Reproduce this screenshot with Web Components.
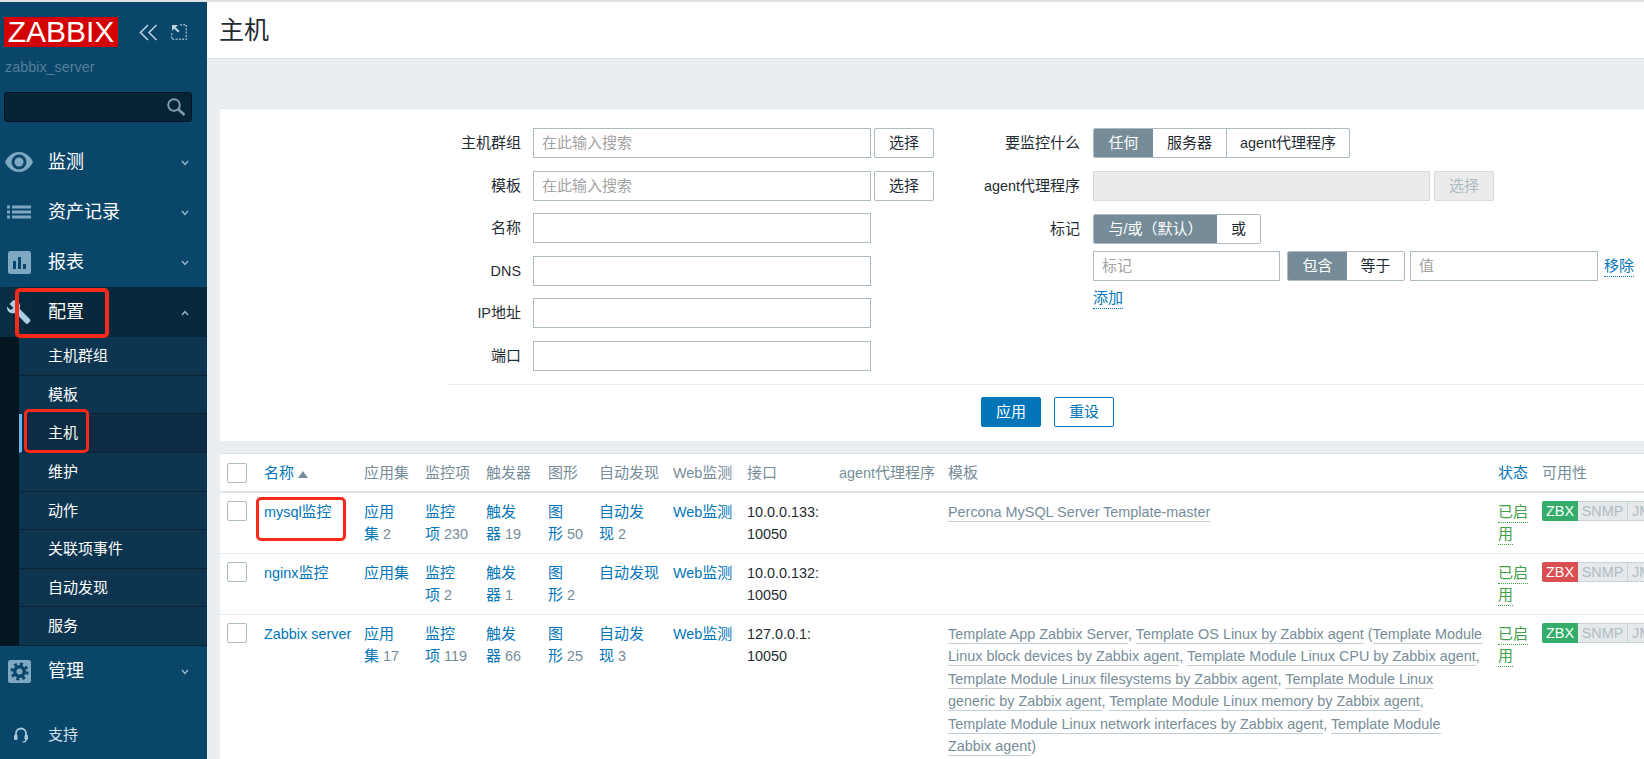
<!DOCTYPE html>
<html lang="zh">
<head>
<meta charset="utf-8">
<title>主机</title>
<style>
html,body{margin:0;padding:0;height:759px;overflow:hidden;background:#fff}
body{font:14.4px/22.5px "Liberation Sans","Noto Sans CJK SC",sans-serif;color:#1f2c33}
</style>
</head>
<body>
<zbx-app>
  <zbx-sidebar slot="side"></zbx-sidebar>
  <zbx-page-header>主机</zbx-page-header>
  <zbx-filter></zbx-filter>
  <zbx-hosts>
    <zbx-host-row name="mysql监控" marked apps="应用|集 2" items="监控|项 230" triggers="触发|器 19" graphs="图|形 50" disc="自动发|现 2" iface="10.0.0.133:|10050" zbx="ok" tpl="p"></zbx-host-row>
    <zbx-host-row name="nginx监控" apps="应用集" items="监控|项 2" triggers="触发|器 1" graphs="图|形 2" disc="自动发现" iface="10.0.0.132:|10050" zbx="bad"></zbx-host-row>
    <zbx-host-row name="Zabbix server" apps="应用|集 17" items="监控|项 119" triggers="触发|器 66" graphs="图|形 25" disc="自动发|现 3" iface="127.0.0.1:|10050" zbx="ok" tpl="z"></zbx-host-row>
  </zbx-hosts>
</zbx-app>
<script>
const cjk = s => s.replace(/[\u3400-\u9fff\uff00-\uffef]+/g, m => `<span class="c">${m}</span>`);
const CJK_CSS = `.c{font-size:15px}`;
function shadow(el, html){ el.attachShadow({mode:'open'}).innerHTML = html; }

customElements.define('zbx-app', class extends HTMLElement{
  constructor(){super();shadow(this,`<style>
    :host{display:grid;grid-template-columns:207px 1fr;height:757px;border-top:2px solid #dfe2e4;overflow:hidden;background:#fff}
    main{display:flex;flex-direction:column;background:#ebeef0;min-width:0;overflow:hidden}
  </style><slot name="side"></slot><main><slot></slot></main>`);}
});

customElements.define('zbx-mark', class extends HTMLElement{
  constructor(){super();shadow(this,`<style>
    :host{position:absolute;box-sizing:border-box;border:3px solid #fa2a1a;border-radius:5px;pointer-events:none;z-index:5}
  </style>`);}
});

const ICONS = {
  eye:`<svg width="28" height="20" viewBox="0 0 28 20"><path fill="#7fa8c2" d="M14 0C7.5 0 2.5 4.5 0 10c2.500 5.500 7.500 10 14 10s11.500-4.500 14-10C25.500 4.500 20.500 0 14 0z"/><circle cx="14" cy="10" r="7.500" fill="#0a466a"/><circle cx="14" cy="10" r="4.500" fill="#7fa8c2"/></svg>`,
  list:`<svg width="24" height="14" viewBox="0 0 24 14" fill="#7fa8c2"><rect x="0" y="0.500" width="3" height="3"/><rect x="5" y="0.500" width="19" height="3"/><rect x="0" y="5.500" width="3" height="3"/><rect x="5" y="5.500" width="19" height="3"/><rect x="0" y="10.500" width="3" height="3"/><rect x="5" y="10.500" width="19" height="3"/></svg>`,
  chart:`<svg width="23" height="23" viewBox="0 0 23 23"><rect width="23" height="23" rx="2.500" fill="#7fa8c2"/><rect x="5" y="10" width="3" height="8" fill="#0a466a"/><rect x="10" y="6" width="3" height="12" fill="#0a466a"/><rect x="15" y="13" width="3" height="5" fill="#0a466a"/></svg>`,
  wrench:`<svg width="24" height="24" viewBox="0 0 24 24"><path fill="#a9d0e5" d="M6 0.500 2.500 4 6.500 8 3.500 10 0 6.500C-.5 10 1.500 13 5 13.300c1.500.100 2.500-.100 3.500-.600L18.500 23.300c.800.800 2 .800 2.800 0l1.500-1.500c.800-.800.800-2 0-2.800L12.500 8.800c.500-1 .700-2.200.500-3.500C12.500 2 9.500-.200 6 .500z"/></svg>`,
  gear:`<svg width="23" height="23" viewBox="0 0 23 23"><rect width="23" height="23" rx="2.500" fill="#7fa8c2"/><circle cx="11.500" cy="11.500" r="6.500" fill="#0a466a"/><circle cx="11.500" cy="11.500" r="7.600" fill="none" stroke="#0a466a" stroke-width="3" stroke-dasharray="3 3"/><circle cx="11.500" cy="11.500" r="3" fill="#7fa8c2"/></svg>`,
  head:`<svg width="14" height="16" viewBox="0 0 14 16" fill="none"><path d="M2 9V6.500a5 5 0 0 1 10 0V9" stroke="#a9c9db" stroke-width="1.800"/><rect x="0" y="7.500" width="3.500" height="5.500" rx="1.500" fill="#a9c9db"/><rect x="10.500" y="7.500" width="3.500" height="5.500" rx="1.500" fill="#a9c9db"/><path d="M12 13c0 1.500-1.500 2-3.500 2" stroke="#a9c9db" stroke-width="1.200"/></svg>`
};
const CHEV = d => `<svg class="chev" width="8" height="6" viewBox="0 0 8 6" fill="none"><path d="${d?'M1 1l3 3.500L7 1':'M1 5l3-3.500L7 5'}" stroke="#9dbccd" stroke-width="1.300"/></svg>`;

customElements.define('zbx-menu-item', class extends HTMLElement{
  connectedCallback(){
    if(this.shadowRoot) return;
    const open=this.hasAttribute('open');
    shadow(this,`<style>
      :host{display:flex;align-items:center;height:50px;position:relative;color:#fff;font-size:18px;flex:none}
      :host([open]){background:linear-gradient(90deg,#0a2e44,#08293d 30px)}
      .i{width:48px;flex:none;display:flex;justify-content:center;padding-right:10px;box-sizing:border-box;height:24px;align-items:center}
      .t{flex:1}
      .chev{margin-right:18px;margin-top:2px}
    </style><span class="i">${ICONS[this.getAttribute('icon')]}</span><span class="t"><slot></slot></span>${CHEV(!open)}`);
  }
});

customElements.define('zbx-sub-item', class extends HTMLElement{
  constructor(){super();shadow(this,`<style>
    :host{display:flex;align-items:center;box-sizing:border-box;height:38.625px;padding:1px 0 0 29px;background:#0e3550;border-bottom:1px solid #0a2231;color:#fff;font-size:15px;position:relative;flex:none}
    :host([current]){background:#0b2c42;padding-left:26px;border-left:3px solid #63b5ef}
  </style><slot></slot>`);}
});

customElements.define('zbx-sidebar', class extends HTMLElement{
  constructor(){super();shadow(this,`<style>
    :host{display:flex;flex-direction:column;background:#0a466a;height:757px;overflow:hidden}
    .top{display:flex;align-items:center;padding:15px 0 0 4px;height:30px}
    .logo{background:#d40000;color:#fff;width:114px;height:30px;font:30px/30px "Liberation Sans",sans-serif;text-align:center;flex:none}
    .top svg{flex:none}
    .c1{margin-left:21px}.c2{margin-left:13px}
    .srv{padding-left:5px;margin-top:12px;height:17px;line-height:17px;color:#557f98;font-size:14.400px}
    .search{margin:16px 0 15px 4px;box-sizing:border-box;width:188px;height:30px;background:#072434;border:1px solid #04141e;border-radius:3px;display:flex;align-items:center;justify-content:flex-end;padding-right:5px}
    .sub{background:#041620;padding-left:19px;position:relative;flex:none}
    .foot{margin-top:auto;display:flex;align-items:center;height:48px;color:#d5e3ec;font-size:15px}
    .foot span{width:48px;display:flex;justify-content:center;padding-right:6px;box-sizing:border-box}
  </style>
  <div class="top">
    <div class="logo">ZABBIX</div>
    <svg class="c1" width="19" height="17" viewBox="0 0 19 17" fill="none" stroke="#b9d0de" stroke-width="1.600"><path d="M9 1 1.500 8.500 9 16"/><path d="M17.500 1 10 8.500 17.500 16"/></svg>
    <svg class="c2" width="16" height="16" viewBox="0 0 16 16" fill="none"><path d="M9 .7h6.300v14.600H.7V9" stroke="#8fb0c4" stroke-width="1.400" stroke-dasharray="2 1.300"/><path d="M1 1h6L4.800 3.200 8.500 7 7 8.500 3.200 4.800 1 7z" fill="#b9d0de"/></svg>
  </div>
  <div class="srv">zabbix_server</div>
  <div class="search"><svg width="20" height="20" viewBox="0 0 20 20" fill="none" stroke="#7e9dae"><circle cx="8" cy="8" r="5.800" stroke-width="2"/><path d="M12.500 12.500 18.500 18" stroke-width="2.600"/></svg></div>
  <zbx-menu-item icon="eye">监测</zbx-menu-item>
  <zbx-menu-item icon="list">资产记录</zbx-menu-item>
  <zbx-menu-item icon="chart">报表</zbx-menu-item>
  <zbx-menu-item icon="wrench" open>配置<zbx-mark style="left:15px;top:1px;width:94px;height:50px;border-width:4px"></zbx-mark></zbx-menu-item>
  <div class="sub">
    <zbx-sub-item>主机群组</zbx-sub-item>
    <zbx-sub-item>模板</zbx-sub-item>
    <zbx-sub-item current>主机<zbx-mark style="left:2px;top:-5px;width:65px;height:44px"></zbx-mark></zbx-sub-item>
    <zbx-sub-item>维护</zbx-sub-item>
    <zbx-sub-item>动作</zbx-sub-item>
    <zbx-sub-item>关联项事件</zbx-sub-item>
    <zbx-sub-item>自动发现</zbx-sub-item>
    <zbx-sub-item>服务</zbx-sub-item>
  </div>
  <zbx-menu-item icon="gear">管理</zbx-menu-item>
  <div class="foot"><span>${ICONS.head}</span>支持</div>`);}
});

customElements.define('zbx-page-header', class extends HTMLElement{
  constructor(){super();shadow(this,`<style>
    :host{display:flex;align-items:center;box-sizing:border-box;flex:none;height:57px;padding:0 0 0 12px;background:#fff;border-bottom:1px solid #dfe4e7;font-size:25px;color:#1f2c33;margin-bottom:49px}
  </style><slot></slot>`);}
});

customElements.define('zbx-input', class extends HTMLElement{
  constructor(){super();shadow(this,`<style>
    :host{display:flex;align-items:center;box-sizing:border-box;height:30px;border:1px solid #acbbc2;background:#fff;padding:1px 0 0 8px;color:#a3a3a3;font-size:15px;flex:none}
    :host([disabled]){background:#ebebeb;border-color:#d5dadd}
  </style><slot></slot>`);}
});

customElements.define('zbx-button', class extends HTMLElement{
  constructor(){super();shadow(this,`<style>
    :host{display:flex;align-items:center;justify-content:center;box-sizing:border-box;width:60px;height:30px;padding-top:1px;border:1px solid #acbbc2;border-radius:2px;background:#fff;color:#1f2c33;font-size:15px;flex:none}
    :host([disabled]){background:#ebebeb;border-color:#d5dadd;color:#acbbc2}
    :host([primary]){background:#0275b8;border-color:#0275b8;color:#fff}
    :host([outline]){border-color:#0275b8;color:#0275b8}
  </style><slot></slot>`);}
});

customElements.define('zbx-seg', class extends HTMLElement{
  connectedCallback(){
    if(this.shadowRoot) return;
    const items=this.getAttribute('items').split('|').map(s=>s.split(':'));
    const active=+(this.getAttribute('active')||0);
    shadow(this,`<style>${CJK_CSS}
      :host{display:flex;flex:none;height:30px;box-sizing:border-box;border:1px solid #acbbc2;border-radius:2px;background:#fff;overflow:hidden}
      span.b{display:flex;align-items:center;justify-content:center;box-sizing:border-box;height:100%;padding-top:1px;color:#1f2c33;border-left:1px solid #acbbc2;white-space:nowrap}
      span.b:first-child{border-left:0}
      span.on{background:#768d99;color:#fff;border-left:0}
      span.on + span.b{border-left:0}
    </style>${items.map(([t,w],i)=>`<span class="b${i===active?' on':''}" style="width:${w}px">${cjk(t)}</span>`).join('')}`);
  }
});

customElements.define('zbx-form-row', class extends HTMLElement{
  connectedCallback(){
    if(this.shadowRoot) return;
    const l=this.getAttribute('label')||'';
    const pad=/[\u4e00-\u9fff]/.test(l)&&!/[A-Z]/.test(l)?1:0;
    shadow(this,`<style>${CJK_CSS}
      :host{display:flex;align-items:center;height:30px;flex:none}
      label{width:var(--lw);flex:none;text-align:right;box-sizing:border-box;color:#1f2c33;white-space:nowrap;padding-top:${pad}px}
      .ctl{display:flex;gap:var(--g,3px);align-items:center;margin-left:var(--lg)}
    </style><label>${cjk(l)}</label><div class="ctl"><slot></slot></div>`);
  }
});

customElements.define('zbx-filter', class extends HTMLElement{
  constructor(){super();shadow(this,`<style>
    :host{display:block;box-sizing:border-box;flex:none;height:333px;margin-left:13px;background:#fff;border-top:1px solid #dfe4e7;margin-bottom:12px;color:#1f2c33}
    .cols{display:flex;height:275px;box-sizing:border-box;padding-top:19px}
    .l,.r{display:flex;flex-direction:column}
    .l{--lw:301px;--lg:12px;gap:12.600px;width:740px;flex:none}
    .r{--lw:120px;--lg:13px}
    .sep{height:1px;background:#e8ebed;margin-left:228px}
    .acts{display:flex;gap:13px;padding:12px 0 0 761px}
    .link{color:#0275b8;border-bottom:1px dotted #0275b8;line-height:21px;font-size:15px;display:inline-block}
    .add{margin:6px 0 0 133px;align-self:flex-start}
    .rm{margin-left:-1px}
  </style>
  <div class="cols">
    <div class="l">
      <zbx-form-row label="主机群组"><zbx-input style="width:338px">在此输入搜索</zbx-input><zbx-button>选择</zbx-button></zbx-form-row>
      <zbx-form-row label="模板"><zbx-input style="width:338px">在此输入搜索</zbx-input><zbx-button>选择</zbx-button></zbx-form-row>
      <zbx-form-row label="名称"><zbx-input style="width:338px"></zbx-input></zbx-form-row>
      <zbx-form-row label="DNS"><zbx-input style="width:338px"></zbx-input></zbx-form-row>
      <zbx-form-row label="IP地址"><zbx-input style="width:338px"></zbx-input></zbx-form-row>
      <zbx-form-row label="端口"><zbx-input style="width:338px"></zbx-input></zbx-form-row>
    </div>
    <div class="r">
      <zbx-form-row label="要监控什么"><zbx-seg items="任何:59|服务器:73|agent代理程序:123" active="0"></zbx-seg></zbx-form-row>
      <zbx-form-row style="margin-top:13px" label="agent代理程序"><zbx-input disabled style="width:337px"></zbx-input><zbx-button disabled style="margin-left:1px">选择</zbx-button></zbx-form-row>
      <zbx-form-row style="margin-top:13px" label="标记"><zbx-seg items="与/或（默认）:123|或:43" active="0"></zbx-seg></zbx-form-row>
      <zbx-form-row style="margin-top:7px;--g:7px" label="">
        <zbx-input style="width:187px">标记</zbx-input>
        <zbx-seg items="包含:59|等于:57" active="0"></zbx-seg>
        <zbx-input style="width:188px;margin-left:-2px">值</zbx-input>
        <span class="link rm">移除</span>
      </zbx-form-row>
      <span class="link add">添加</span>
    </div>
  </div>
  <div class="sep"></div>
  <div class="acts"><zbx-button primary>应用</zbx-button><zbx-button outline>重设</zbx-button></div>`);}
});

const COLS='37px 100px 61px 61px 62px 51px 74px 74px 92px 109px 550px 44px 102px';

customElements.define('zbx-check', class extends HTMLElement{
  constructor(){super();shadow(this,`<style>:host{display:block;box-sizing:border-box;width:20px;height:20px;border:1px solid #acbbc2;border-radius:2px;background:#fff}</style>`);}
});

customElements.define('zbx-hosts', class extends HTMLElement{
  constructor(){super();const heads=['名称','应用集','监控项','触发器','图形','自动发现','Web监测','接口','agent代理程序','模板','状态','可用性'];
  shadow(this,`<style>${CJK_CSS}
    :host{display:block;flex:1;margin-left:13px;background:#fff;border-top:1px solid #dfe4e7;--cols:${COLS};color:#768d99}
    .h{display:grid;grid-template-columns:var(--cols);height:37px;align-items:center;padding-left:7px;border-bottom:2px solid #dfe4e7;white-space:nowrap}
    .h div{padding-top:1px}
    .a{color:#0275b8}
    .tri{display:inline-block;width:0;height:0;border:5px solid transparent;border-top:0;border-bottom:7px solid #768d99;margin-left:4px;vertical-align:0}
    zbx-check{display:block}
  </style>
  <div class="h"><zbx-check></zbx-check>${heads.map((t,i)=>`<div class="${i==0||i==10?'a':''}">${cjk(t)}${i==0?'<i class="tri"></i>':''}</div>`).join('')}</div>
  <slot></slot>`);}
});

const TPL_P=[['Percona MySQL Server Template-master']];
const TPL_Z=[
 ['Template App Zabbix Server',', ','Template OS Linux by Zabbix agent',' (','Template Module'],
 ['Linux block devices by Zabbix agent',', ','Template Module Linux CPU by Zabbix agent',','],
 ['Template Module Linux filesystems by Zabbix agent',', ','Template Module Linux'],
 ['generic by Zabbix agent',', ','Template Module Linux memory by Zabbix agent',','],
 ['Template Module Linux network interfaces by Zabbix agent',', ','Template Module'],
 ['Zabbix agent',')']
];
const tplHtml=l=>l.map(parts=>parts.map((p,i)=>i%2==0?`<span class="u">${p}</span>`:p).join('')).join('<br>');

customElements.define('zbx-host-row', class extends HTMLElement{
  connectedCallback(){
    if(this.shadowRoot) return;
    const g=n=>this.getAttribute(n)||'';
    const link=v=>v.split('|').map(line=>{
        const m=line.match(/^(.*?)( \d+)?$/);
        return `<span class="a">${cjk(m[1])}</span>${m[2]?m[2].replace(' ','\u00a0'):''}`;
      }).join('<br>');
    const tpl=g('tpl')=='p'?TPL_P:g('tpl')=='z'?TPL_Z:null;
    shadow(this,`<style>${CJK_CSS}
      :host{display:grid;grid-template-columns:var(--cols);padding:7.500px 0 7.500px 7px;border-bottom:1px solid #e8ebed;color:#768d99;white-space:nowrap;min-height:45px;align-items:start;position:relative}
      .a{color:#0275b8}
      .d{color:#1f2c33}
      .u{border-bottom:1px solid #c3ced4;padding-bottom:1px}
      .s{color:#429e47;border-bottom:1px dotted #429e47;padding-bottom:2px}
      .av{display:flex;height:20px;margin-top:.5px;width:140px;line-height:20px}
      .av span{flex:none;text-align:center;background:#e6e9eb;color:#aebbc3;box-sizing:border-box;border:1px solid #c8d2d7;border-left:0;line-height:18px}
      .av .z{width:36px;color:#fff;border:0;border-radius:2px 0 0 2px;line-height:20px}
      .av .ok{background:#34ad6a}.av .bad{background:#d94f52}
      .av .n{width:50px}
      .av .j{width:50px;text-align:left;padding-left:4px;border-left:0}
    </style>
    <zbx-check></zbx-check>
    <div class="a" style="position:relative">${cjk(g('name'))}${this.hasAttribute('marked')?'<zbx-mark style="left:-8px;top:-3.500px;width:90px;height:44px"></zbx-mark>':''}</div>
    <div>${link(g('apps'))}</div><div>${link(g('items'))}</div><div>${link(g('triggers'))}</div><div>${link(g('graphs'))}</div><div>${link(g('disc'))}</div>
    <div class="a">${cjk('Web监测')}</div>
    <div class="d">${g('iface').replace('|','<br>')}</div>
    <div></div>
    <div>${tpl?tplHtml(tpl):''}</div>
    <div><span class="s c">已启</span><br><span class="s c">用</span></div>
    <div class="av"><span class="z ${g('zbx')}">ZBX</span><span class="n">SNMP</span><span class="j">JMX</span></div>`);
  }
});
</script>
</body>
</html>
